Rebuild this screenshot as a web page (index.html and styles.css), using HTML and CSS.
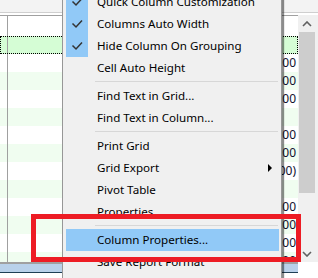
FILE: index.html
```html
<!DOCTYPE html>
<html>
<head>
<meta charset="utf-8">
<link rel="stylesheet" href="styles.css">
</head>
<body>
<div class="screen">
  <div class="grid">
    <div class="grid-head"></div>
    <div class="grid-main">
      <div class="rows">
        <div class="row"><span class="gutter"></span><span class="cell"></span></div>
        <div class="row focused alt-strong"><span class="gutter"></span><span class="cell"></span></div>
        <div class="row"><span class="gutter"></span><span class="cell">1,250.00</span></div>
        <div class="row alt"><span class="gutter"></span><span class="cell">3,400.00</span></div>
        <div class="row"><span class="gutter"></span><span class="cell">2,100.00</span></div>
        <div class="row alt"><span class="gutter"></span><span class="cell"></span></div>
        <div class="row"><span class="gutter"></span><span class="cell">5,800.00</span></div>
        <div class="row alt"><span class="gutter"></span><span class="cell">1,900.00</span></div>
        <div class="row"><span class="gutter"></span><span class="cell">(150.00)</span></div>
        <div class="row alt"><span class="gutter"></span><span class="cell"></span></div>
        <div class="row"><span class="gutter"></span><span class="cell">7,300.00</span></div>
        <div class="row alt"><span class="gutter"></span><span class="cell">4,600.00</span></div>
        <div class="row"><span class="gutter"></span><span class="cell">2,800.00</span></div>
        <div class="row alt"><span class="gutter"></span><span class="cell">9,100.00</span></div>
      </div>
      <div class="vscroll">
        <div class="sb-arrow">
          <svg width="10" height="6" viewBox="0 0 10 6"><path d="M1 5 L5 1 L9 5" fill="none" stroke="#606060" stroke-width="1.6"/></svg>
        </div>
        <div class="sb-track"><div class="sb-thumb"></div></div>
        <div class="sb-arrow">
          <svg width="10" height="6" viewBox="0 0 10 6"><path d="M1 1 L5 5 L9 1" fill="none" stroke="#606060" stroke-width="1.6"/></svg>
        </div>
      </div>
    </div>
    <div class="hbar"></div>
  </div>

  <div class="menu">
    <div class="item checked"><span class="chk"><svg width="22" height="22" viewBox="0 0 22 22"><path d="M6.5 10.5 L10 14 L16 7.5" fill="none" stroke="#333" stroke-width="1.5"/></svg></span><span class="label">Quick Column Customization</span></div>
    <div class="item checked"><span class="chk"><svg width="22" height="22" viewBox="0 0 22 22"><path d="M6.5 10.5 L10 14 L16 7.5" fill="none" stroke="#333" stroke-width="1.5"/></svg></span><span class="label">Columns Auto Width</span></div>
    <div class="item checked"><span class="chk"><svg width="22" height="22" viewBox="0 0 22 22"><path d="M6.5 10.5 L10 14 L16 7.5" fill="none" stroke="#333" stroke-width="1.5"/></svg></span><span class="label">Hide Column On Grouping</span></div>
    <div class="item"><span class="chk"></span><span class="label">Cell Auto Height</span></div>
    <div class="sep"></div>
    <div class="item"><span class="chk"></span><span class="label">Find Text in Grid...</span></div>
    <div class="item"><span class="chk"></span><span class="label">Find Text in Column...</span></div>
    <div class="sep"></div>
    <div class="item"><span class="chk"></span><span class="label">Print Grid</span></div>
    <div class="item"><span class="chk"></span><span class="label">Grid Export</span><span class="sub"></span></div>
    <div class="item"><span class="chk"></span><span class="label">Pivot Table</span></div>
    <div class="item"><span class="chk"></span><span class="label">Properties</span></div>
    <div class="sep"></div>
    <div class="item hot"><span class="chk"></span><span class="label">Column Properties...</span></div>
    <div class="item"><span class="chk"></span><span class="label">Save Report Format</span></div>
    <div class="item"><span class="chk"></span><span class="label">Load Report Format</span></div>
  </div>

  <div class="annot"></div>
</div>
</body>
</html>
```
FILE: styles.css
```css
html, body {
  margin: 0;
  padding: 0;
  background: #ffffff;
}
.screen {
  position: relative;
  width: 318px;
  height: 278px;
  overflow: hidden;
  font-family: "Noto Sans", "Open Sans", sans-serif;
  font-size: 11.6px;
  color: #000;
}
.grid {
  display: flex;
  flex-direction: column;
  width: 318px;
  height: 278px;
}
.grid-head {
  height: 12px;
  background: #f3f3f3;
  border-bottom: 1px solid #cfcfcf;
  flex: none;
}
.grid-main {
  display: flex;
  height: 249px;
  flex: none;
  border-top: 2px solid #ffffff;
  box-sizing: border-box;
  box-shadow: inset 0 1px 0 #a0a0a0;
}
.rows {
  width: 298px;
  flex: none;
  padding-top: 3px;
  box-sizing: border-box;
  overflow: hidden;
  background: linear-gradient(to right, transparent 7px, #a0a0a0 7px, #a0a0a0 8px, transparent 8px);
}
.row {
  display: flex;
  height: 18px;
  align-items: center;
}
.row.alt { background: #f0fdf0; }
.row.alt-strong { background: #d5fdd5; }
.row.focused {
  outline: 1px dotted #000;
  outline-offset: -1px;
}
.gutter {
  width: 7px;
  height: 18px;
  border-right: 1px solid #a0a0a0;
  flex: none;
}
.cell {
  flex: 1;
  text-align: right;
  padding-right: 2px;
  color: #101030;
  font-size: 12px;
  line-height: 18px;
}
.vscroll {
  width: 20px;
  flex: none;
  background: #f0f0f0;
  display: flex;
  flex-direction: column;
  padding-left: 1px;
  padding-right: 3px;
  box-sizing: border-box;
}
.sb-arrow {
  height: 17px;
  flex: none;
  display: flex;
  align-items: center;
  justify-content: center;
}
.sb-track {
  flex: 1;
}
.sb-thumb {
  height: 161px;
  background: #cdcdcd;
}
.hbar {
  flex: none;
  height: 13px;
  box-sizing: border-box;
  width: 298px;
  border-top: 2px solid #a0a0a0;
  background: linear-gradient(to bottom, #b9d1ea 0, #b9d1ea 8px, #1f3f55 8px, #1f3f55 9px, #ffffff 9px);
}
.menu {
  position: absolute;
  left: 62px;
  top: -12px;
  width: 220px;
  box-sizing: border-box;
  background: #f0f0f0;
  border: 1px solid #979797;
  box-shadow: 2px 2px 1px rgba(0, 0, 0, 0.45);
  padding: 2px 2px 2px 3px;
}
.item {
  display: flex;
  align-items: center;
  height: 22px;
  position: relative;
}
.item.hot { background: #91c9f7; }
.chk {
  width: 22px;
  height: 22px;
  flex: none;
  display: block;
}
.checked .chk { background: #91c9f7; }
.chk svg { display: block; }
.label {
  padding-left: 9px;
  white-space: nowrap;
  line-height: 22px;
}
.sub {
  position: absolute;
  left: 202px;
  top: 7px;
  width: 0;
  height: 0;
  border-top: 4px solid transparent;
  border-bottom: 4px solid transparent;
  border-left: 4px solid #000;
}
.sep {
  height: 6px;
  display: flex;
  flex-direction: column;
}
.sep::before {
  content: "";
  display: block;
  height: 1px;
  margin-top: 2px;
  margin-left: 29px;
  margin-right: 1px;
  background: #d7d7d7;
}
.annot {
  position: absolute;
  left: 31px;
  top: 214px;
  width: 270px;
  height: 48px;
  box-sizing: border-box;
  border: 5px solid #ed1c24;
}
```
